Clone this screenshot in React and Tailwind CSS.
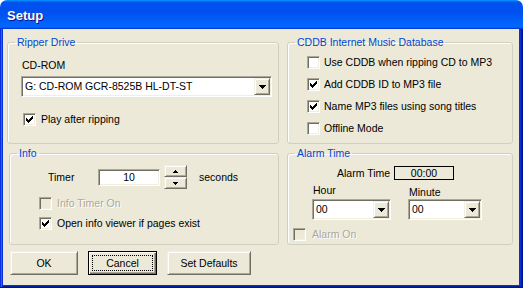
const raised =
  "border border-t-[#f1efe2] border-l-[#f1efe2] border-r-[#716f64] border-b-[#716f64] shadow-[inset_1px_1px_#fff,inset_-1px_-1px_#aca899] bg-[#ece9d8]";
const sunken =
  "border border-t-[#aca899] border-l-[#aca899] border-r-white border-b-white shadow-[inset_1px_1px_#716f64,inset_-1px_-1px_#f1efe2]";

const CheckMark = () => (
  <svg width="7" height="7" viewBox="0 0 7 7" shapeRendering="crispEdges">
    <path
      fill="#000"
      d="M0 2h1v3h-1zM1 3h1v3h-1zM2 4h1v3h-1zM3 3h1v3h-1zM4 2h1v3h-1zM5 1h1v3h-1zM6 0h1v3h-1z"
    />
  </svg>
);

const DownArrow = () => (
  <svg width="7" height="4" viewBox="0 0 7 4" shapeRendering="crispEdges">
    <path fill="#000" d="M0 0h7v1h-1v1h-1v1h-1v1h-1v-1h-1v-1h-1v-1h-1z" />
  </svg>
);

const SmallArrow = ({ up }) => (
  <svg width="5" height="3" viewBox="0 0 5 3" shapeRendering="crispEdges">
    <path
      fill="#000"
      d={up ? "M2 0h1v1h1v1h1v1h-5v-1h1v-1h1z" : "M0 0h5v1h-1v1h-1v1h-1v-1h-1v-1h-1z"}
    />
  </svg>
);

function Check({ checked, disabled, label, gap = "ml-[4px]" }) {
  return (
    <div className="flex h-[13px] items-center">
      <span
        className={`flex h-[13px] w-[13px] shrink-0 items-center justify-center ${sunken} ${
          disabled ? "bg-[#ece9d8]" : "bg-white"
        }`}
      >
        {checked && <CheckMark />}
      </span>
      <span
        className={`${gap} leading-[13px] ${
          disabled ? "text-[#aca899] [text-shadow:1px_1px_0_#fff]" : "text-black"
        }`}
      >
        {label}
      </span>
    </div>
  );
}

function Combo({ value, className }) {
  return (
    <div className={`flex h-[21px] bg-white p-[1px] ${sunken} ${className}`}>
      <span className="flex-1 truncate pl-[2px] leading-[17px]">{value}</span>
      <span className={`flex h-[17px] w-[16px] items-center justify-center ${raised}`}>
        <DownArrow />
      </span>
    </div>
  );
}

function Group({ title, className, children }) {
  return (
    <fieldset
      className={`rounded-[3px] border border-[#d0d0bf] shadow-[inset_1px_1px_#fff] ${className}`}
    >
      <legend className="ml-[7px] px-[2px] leading-[13px] text-[#0046d5]">{title}</legend>
      {children}
    </fieldset>
  );
}

function Button({ children, width, isDefault }) {
  if (isDefault) {
    return (
      <button
        className={`flex h-[24px] ${width} border border-black bg-[#ece9d8] p-[1px] shadow-[inset_1px_1px_#fff,inset_-1px_-1px_#716f64,inset_-2px_-2px_#aca899]`}
      >
        <span className="m-[2px] flex flex-1 items-center justify-center border border-dotted border-black leading-[13px] text-black">
          {children}
        </span>
      </button>
    );
  }
  return (
    <button
      className={`flex h-[24px] ${width} items-center justify-center leading-[13px] text-black ${raised}`}
    >
      {children}
    </button>
  );
}

export default function App() {
  return (
    <div className="h-[288px] w-[523px] bg-white font-['Liberation_Sans',Arial,sans-serif] text-[10.5px] text-black">
      {/* Title bar */}
      <div className="flex h-[29px] items-center rounded-t-[7px] bg-[linear-gradient(180deg,#0997ff,#0053ee_8%,#0050ee_40%,#0066ff_88%,#0066ff_93%,#005bff_95%,#003dd7_96%,#003dd7)] pl-[7px] pt-[2px]">
        <span className="text-[13px] font-bold text-white [text-shadow:1px_1px_0_#0f1089]">
          Setup
        </span>
      </div>

      {/* Frame */}
      <div className="flex h-[259px] bg-[#0831d9] pb-[3px] pl-[3px] pr-[4px] shadow-[inset_-1px_-1px_#00138c,inset_1px_0_#0831d9,inset_2px_0_#166aee,inset_-2px_-2px_#001ea0]">
        <div className="flex flex-1 flex-col bg-[#ece9d8] pl-[4px] pt-[7px]">
          {/* Top row */}
          <div className="flex gap-[8px]">
            <Group title="Ripper Drive" className="h-[108px] w-[272px]">
              <div className="mt-[10px] pl-[14px] leading-[13px]">CD-ROM</div>
              <Combo value="G: CD-ROM GCR-8525B HL-DT-ST" className="ml-[13px] mt-[4px] w-[251px]" />
              <div className="ml-[15px] mt-[16px]">
                <Check checked label="Play after ripping" gap="ml-[5px]" />
              </div>
            </Group>

            <Group title="CDDB Internet Music Database" className="h-[108px] w-[226px]">
              <div className="ml-[19px] mt-[7px] flex flex-col gap-[9px]">
                <Check label="Use CDDB when ripping CD to MP3" />
                <Check checked label="Add CDDB ID to MP3 file" />
                <Check checked label="Name MP3 files using song titles" />
                <Check label="Offline Mode" />
              </div>
            </Group>
          </div>

          {/* Bottom row */}
          <div className="mt-[3px] flex gap-[8px]">
            <Group title="Info" className="ml-[2px] h-[98px] w-[270px]">
              <div className="mt-[5px] flex h-[24px] items-center">
                <span className="w-[88px] pl-[38px] leading-[13px]">Timer</span>
                <span
                  className={`flex h-[17px] w-[62px] items-center justify-center bg-white leading-[13px] text-black ${sunken}`}
                >
                  10
                </span>
                <div className="ml-[4px] flex h-[24px] w-[23px] flex-col">
                  <span className={`flex h-[12px] items-center justify-center ${raised}`}>
                    <SmallArrow up />
                  </span>
                  <span className={`flex h-[12px] items-center justify-center ${raised}`}>
                    <SmallArrow />
                  </span>
                </div>
                <span className="ml-[12px] leading-[13px]">seconds</span>
              </div>
              <div className="ml-[29px] mt-[8px] flex flex-col gap-[7px]">
                <Check disabled label="Info Timer On" gap="ml-[5px]" />
                <Check checked label="Open info viewer if pages exist" gap="ml-[5px]" />
              </div>
            </Group>

            <Group title="Alarm Time" className="h-[98px] w-[226px]">
              <div className="mt-[6px] flex h-[14px] items-center">
                <span className="w-[106px] pl-[49px] leading-[13px]">Alarm Time</span>
                <span className="flex h-[14px] w-[60px] items-center justify-center border border-black leading-[12px]">
                  00:00
                </span>
              </div>
              <div className="mt-[4px] flex">
                <div className="ml-[24px] w-[79px]">
                  <div className="pl-[1px] leading-[13px]">Hour</div>
                  <Combo value="00" className="mt-[2px] w-[79px]" />
                </div>
                <div className="ml-[17px] w-[74px]">
                  <div className="pl-[1px] pt-[2px] leading-[13px]">Minute</div>
                  <Combo value="00" className="w-[74px]" />
                </div>
              </div>
              <div className="ml-[5px] mt-[8px]">
                <Check disabled label="Alarm On" gap="ml-[6px]" />
              </div>
            </Group>
          </div>

          {/* Buttons */}
          <div className="ml-[3px] mt-[6px] flex gap-[10px]">
            <Button width="w-[68px]">OK</Button>
            <Button width="w-[69px]" isDefault>
              Cancel
            </Button>
            <Button width="w-[84px]">Set Defaults</Button>
          </div>
        </div>
      </div>
    </div>
  );
}
